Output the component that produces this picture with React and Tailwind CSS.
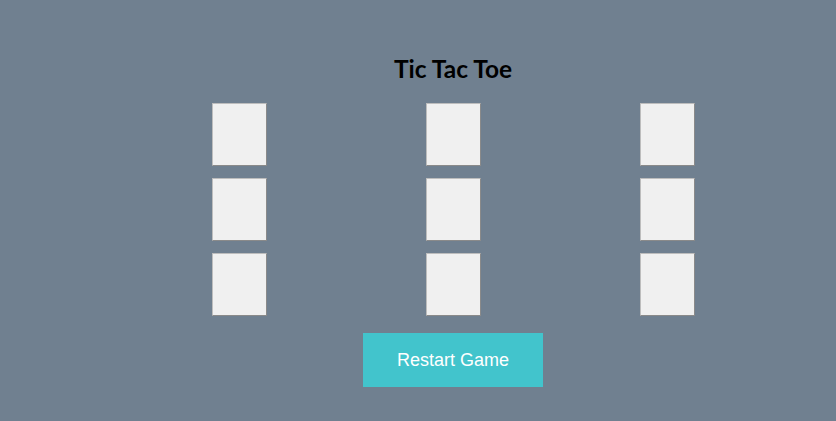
import React from "react";

export default function App() {
  const rows = [0, 1, 2];
  return (
    <div className="min-h-[421px] w-full bg-[#708090] pl-[70px]">
      <div className="flex flex-col items-center pt-[53px]">
        <h2 className="text-[24.5px] font-bold leading-[32px] text-black" style={{ fontFamily: "Lato, 'Noto Sans', sans-serif" }}>
          Tic Tac Toe
        </h2>
        <div className="mt-[18px] flex w-[483px] flex-col gap-[12px]">
          {rows.map((r) => (
            <div key={r} className="flex justify-between">
              {[0, 1, 2].map((c) => (
                <button
                  key={c}
                  className="h-[63px] w-[55px] border border-[#8a8a8a] border-t-[#bdbdbd] border-l-[#bdbdbd] bg-[#f0f0f0]"
                />
              ))}
            </div>
          ))}
        </div>
        <button
          className="mt-[17px] h-[54px] w-[180px] bg-[#42c4cc] text-[18px] text-white"
          style={{ fontFamily: "'Liberation Sans', Arial, sans-serif" }}
        >
          Restart Game
        </button>
      </div>
    </div>
  );
}
